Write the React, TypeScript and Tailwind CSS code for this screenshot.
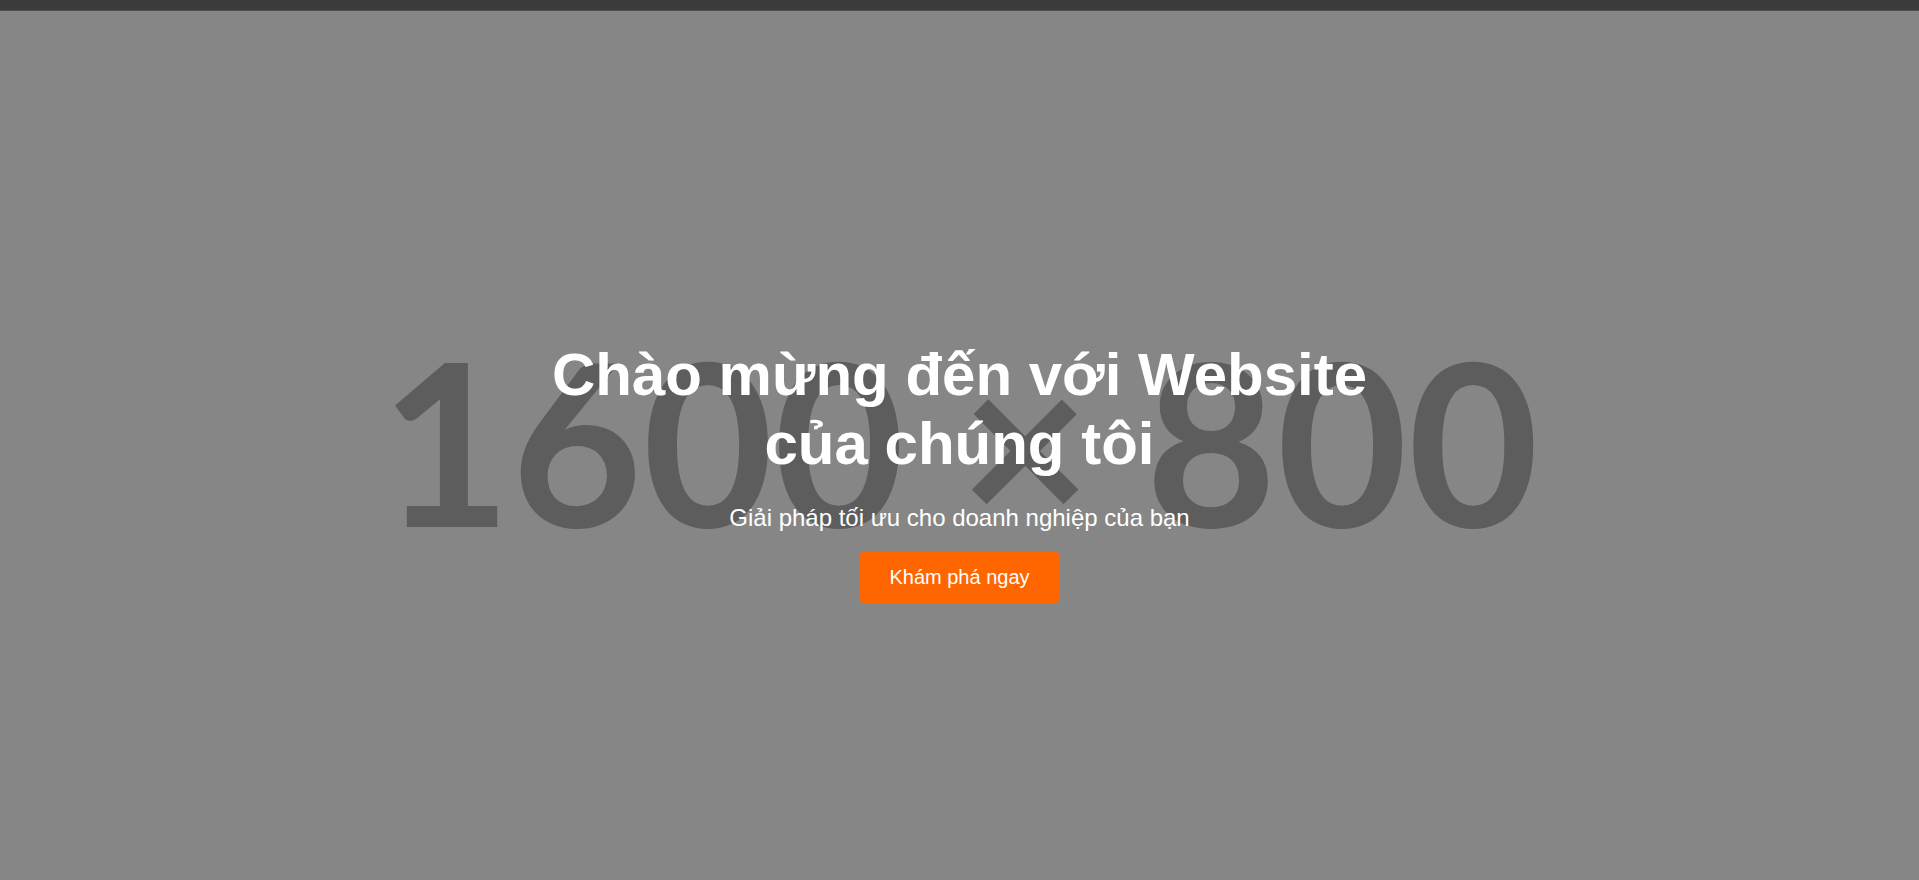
export default function App() {
  return (
    <div className="w-full h-[880px] flex flex-col bg-[#868686] overflow-hidden">
      {/* TOP BAR */}
      <div className="h-[11px] bg-[#3b3b3b] border-b border-[#4f4f4f] shrink-0" />

      {/* HERO */}
      <section className="grid flex-1">
        {/* placeholder image */}
        <svg className="[grid-area:1/1] w-full h-full" aria-hidden="true">
          <text
            x="50%"
            y="516"
            textAnchor="middle"
            fill="#5d5d5d"
            fontFamily="Lato, sans-serif"
            fontWeight="700"
            fontSize="226"
          >
            1600 × 800
          </text>
        </svg>

        <div className="[grid-area:1/1] flex items-center justify-center pt-[51px] font-['Liberation_Sans',Arial,sans-serif] text-white text-center">
          <div className="flex flex-col items-center">
            <h1 className="text-[60px] leading-[69px] font-bold">
              Chào mừng đến với Website
              <br />
              của chúng tôi
            </h1>
            <p className="text-[24px] leading-[28px] mt-[26px]">
              Giải pháp tối ưu cho doanh nghiệp của bạn
            </p>
            <a
              href="#"
              className="mt-[20px] bg-[#ff6600] text-white text-[20px] leading-[23px] px-[30px] py-[14px] rounded-[5px]"
            >
              Khám phá ngay
            </a>
          </div>
        </div>
      </section>
    </div>
  );
}
